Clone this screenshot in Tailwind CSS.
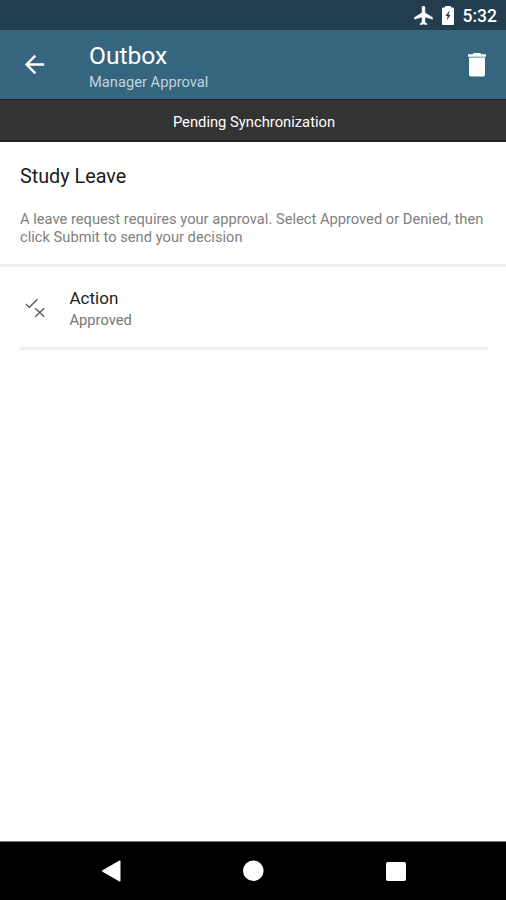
<!DOCTYPE html>
<html lang="en">
<head>
<meta charset="utf-8">
<title>Outbox</title>
<script src="https://cdn.jsdelivr.net/npm/@tailwindcss/browser@4"></script>
</head>
<body class="bg-white">
<div class="flex h-[900px] w-[506px] flex-col overflow-hidden bg-white font-['Roboto',sans-serif]">
  <div class="flex h-[30px] shrink-0 items-center justify-end bg-[#223d4e] pt-px pr-[9px] text-white">
    <svg class="mr-[9px] h-[19px] w-[19px]" viewBox="2 2 19 20" fill="#fff"><path stroke="#fff" stroke-width=".5" d="M21 16v-2l-8-5V3.500c0-.83-.67-1.500-1.500-1.500S10 2.670 10 3.500V9l-8 5v2l8-2.500V19l-2 1.500V22l3.500-1 3.500 1v-1.500L13 19v-5.500l8 2.500z"/></svg>
    <svg class="mr-[9px] h-[19px] w-[12px]" viewBox="0 0 12 19"><path fill="#fff" d="M3 0h6v1.500H11a1 1 0 0 1 1 1V18a1 1 0 0 1-1 1H1a1 1 0 0 1-1-1V2.500a1 1 0 0 1 1-1h2z"/><path fill="#223d4e" d="M7.500 4.500 3.500 10h2.200L4.800 14.500 8.500 9H6.600z"/></svg>
    <span class="text-[17.500px] leading-[30px] font-medium">5:32</span>
  </div>
  <header class="flex h-[69px] shrink-0 bg-[#35657f] text-white">
    <svg class="mt-[20px] ml-[20px] h-[29px] w-[29px]" viewBox="0 0 24 24" fill="#fff"><path d="M20 11H7.830l5.590-5.590L12 4l-8 8 8 8 1.410-1.410L7.830 13H20z"/></svg>
    <div class="ml-[40px] flex flex-1 flex-col items-start pt-[11px]">
      <h1 class="text-[24.600px] leading-[30px]">Outbox</h1>
      <p class="mt-px text-[14.700px] leading-[20px] text-[#c3d3dc]">Manager Approval</p>
    </div>
    <svg class="mt-[23px] mr-[20px] h-[24px] w-[18px]" viewBox="0 0 18 24" fill="#fff"><path d="M0 1.200h4.500L5.800 0h6.400l1.300 1.200H18v2.600H0z"/><path d="M1 4.600h16v16.900a2 2 0 0 1-2 2H3a2 2 0 0 1-2-2z"/></svg>
  </header>
  <div class="flex h-[43px] shrink-0 items-center justify-center border-t border-b-2 border-[#211f20] bg-[#333] pt-[3px] pl-[2px] text-white">
    <span class="text-[14.750px] leading-[20px]">Pending Synchronization</span>
  </div>
  <main class="flex-1">
    <section class="h-[125px] border-b-[3px] border-[#f0f0f0] px-[20px] pt-[23px]">
      <h2 class="text-[19.800px] leading-[24px] text-[#1c1c1c]">Study Leave</h2>
      <p class="mt-[22px] text-[14.700px] leading-[17.500px] whitespace-nowrap text-[#808080]">A leave request requires your approval. Select Approved or Denied, then<br>click Submit to send your decision</p>
    </section>
    <section class="mr-[18px] ml-[20px] flex h-[83px] border-b-[3px] border-[#f0f0f0]">
      <svg class="mt-[31px] ml-[5px] h-[21px] w-[21px]" viewBox="0 0 21 21" fill="none" stroke="#505050" stroke-width="1.200"><path d="M.8 5.800 4.300 9.300 12.500 1.200M10.200 10.200l9 8.500M19.200 10.200l-9 8.500"/></svg>
      <div class="ml-[23.500px] flex flex-col items-start pt-[21px]">
        <h3 class="text-[17px] leading-[21px] text-[#222]">Action</h3>
        <p class="mt-px text-[14.700px] leading-[20px] text-[#777]">Approved</p>
      </div>
    </section>
  </main>
  <nav class="flex h-[59px] shrink-0 items-start border-t border-[#777] bg-black">
    <svg class="mt-[18px] ml-[101px] h-[22px] w-[20px]" viewBox="0 0 20 22" fill="#fff"><path d="M18 .8Q19.500 0 19.500 1.500v19q0 1.500-1.500.7L1.500 11.800q-1-.8 0-1.600z"/></svg>
    <svg class="mt-[18px] ml-[122px] h-[22px] w-[22px]" viewBox="0 0 22 22" fill="#fff"><circle cx="10.300" cy="10.700" r="10.300"/></svg>
    <div class="mt-[19.500px] ml-[121px] h-[19.500px] w-[20px] rounded-[2px] bg-white"></div>
  </nav>
</div>
</body>
</html>
